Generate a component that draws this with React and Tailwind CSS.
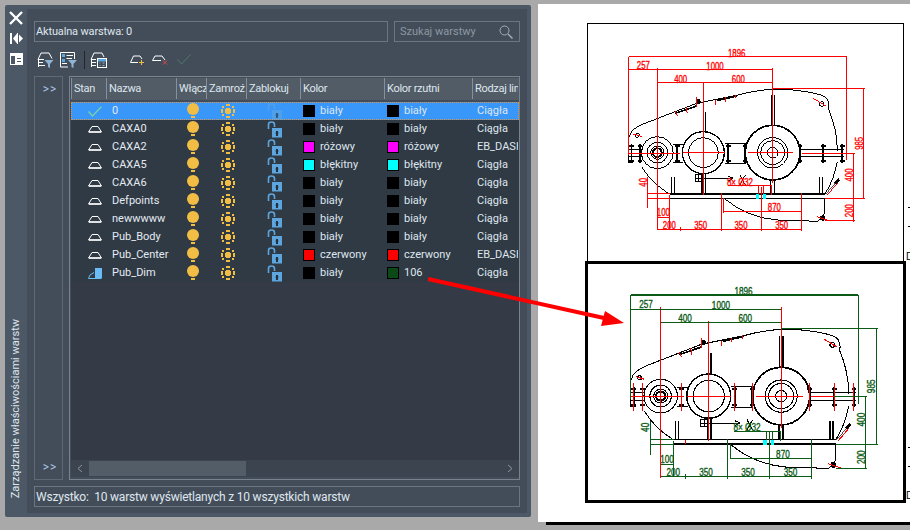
import React from 'react';

const rows = [
  { name: '0', color: '#000000', label: 'biały', plot: '#000000', plotLabel: 'biały', line: 'Ciągła', selected: true },
  { name: 'CAXA0', color: '#000000', label: 'biały', plot: '#000000', plotLabel: 'biały', line: 'Ciągła' },
  { name: 'CAXA2', color: '#ff00ff', label: 'różowy', plot: '#ff00ff', plotLabel: 'różowy', line: 'EB_DASHED' },
  { name: 'CAXA5', color: '#00ffff', label: 'błękitny', plot: '#00ffff', plotLabel: 'błękitny', line: 'Ciągła' },
  { name: 'CAXA6', color: '#000000', label: 'biały', plot: '#000000', plotLabel: 'biały', line: 'Ciągła' },
  { name: 'Defpoints', color: '#000000', label: 'biały', plot: '#000000', plotLabel: 'biały', line: 'Ciągła' },
  { name: 'newwwww', color: '#000000', label: 'biały', plot: '#000000', plotLabel: 'biały', line: 'Ciągła' },
  { name: 'Pub_Body', color: '#000000', label: 'biały', plot: '#000000', plotLabel: 'biały', line: 'Ciągła' },
  { name: 'Pub_Center', color: '#ff0000', label: 'czerwony', plot: '#ff0000', plotLabel: 'czerwony', line: 'EB_DASHED' },
  { name: 'Pub_Dim', color: '#000000', label: 'biały', plot: '#0b4a16', plotLabel: '106', line: 'Ciągła', current: true },
];

const headers = ['Stan', 'Nazwa', 'Włącz', 'Zamroź', 'Zablokuj', 'Kolor', 'Kolor rzutni', 'Rodzaj linii'];
const gridCols = 'grid grid-cols-[35px_70px_30px_40px_54px_84px_88px_46px]';

const LayerShape = ({ stroke = '#ffffff' }) => (
  <svg width="14" height="7" viewBox="0 0 14 7">
    <path d="M0.5 6 L4 0.5 H10 L13.5 6 Z" fill="none" stroke={stroke} strokeWidth="1" />
    <path d="M1 6 H13" stroke={stroke} strokeWidth="1.4" />
  </svg>
);

const Check = ({ color = '#7fd0a0', weight = 1.2 }) => (
  <svg width="14" height="11" viewBox="0 0 14 11">
    <path d="M0.5 5.5 L4.5 10 L13.5 0.5" fill="none" stroke={color} strokeWidth={weight} />
  </svg>
);

const Bulb = () => (
  <svg width="14" height="16" viewBox="0 0 14 16">
    <circle cx="7" cy="6" r="6" fill="#f2bd45" />
    <rect x="5" y="13" width="4" height="2" fill="#f2bd45" />
  </svg>
);

const Sun = () => (
  <svg width="14" height="14" viewBox="0 0 14 14" fill="#f2bd45" shapeRendering="crispEdges">
    <path d="M5 4 H9 V5 H10 V9 H9 V10 H5 V9 H4 V5 H5 Z" />
    <rect x="5" y="0" width="4" height="2" />
    <rect x="5" y="12" width="4" height="2" />
    <rect x="0" y="5" width="2" height="4" />
    <rect x="12" y="5" width="2" height="4" />
    <rect x="1" y="2" width="2" height="2" />
    <rect x="11" y="2" width="2" height="2" />
    <rect x="1" y="10" width="2" height="2" />
    <rect x="11" y="10" width="2" height="2" />
  </svg>
);

const Lock = ({ dim }) => (
  <svg width="15" height="17" viewBox="0 0 15 17" className={dim ? 'opacity-60' : ''}>
    <path d="M1.5 8 V3.5 Q1.5 1 4.5 1 Q7.5 1 7.5 3.5 V6" fill="none" stroke="#5da5de" strokeWidth="1.6" />
    <rect x="5" y="7" width="10" height="9.5" fill="#5da5de" />
    <path d="M9 10 H11 V11.5 H11.5 V12.5 H11 V15 H9 V12.5 H8.5 V11.5 H9 Z" fill="#26303a" />
  </svg>
);

const Swatch = ({ color }) => (
  <span className="h-[12px] w-[12px] shrink-0 border border-black" style={{ backgroundColor: color }} />
);

const Funnel = ({ x, y }) => (
  <path d={`M${x} ${y} h9 l-3.5 4 v4 l-2 -1 v-3 Z`} fill="#8fb4d4" stroke="none" />
);

const FilterLayersIcon = () => (
  <svg width="17" height="16" viewBox="0 0 17 16" fill="none" stroke="#ffffff">
    <path d="M1 7.5 L4 1 H12 L15 6.5 M1 7.5 H7" />
    <path d="M1 10.5 H6 M1 13.5 H8 M1.5 7.5 V15" />
    <Funnel x="7.5" y="8" />
  </svg>
);

const FilterListIcon = () => (
  <svg width="17" height="16" viewBox="0 0 17 16" fill="none" stroke="#ffffff">
    <path d="M0.5 0.5 H14.5 V7 M0.5 0.5 V15 H8" />
    <rect x="2" y="2" width="3" height="3" fill="#5da5de" stroke="none" />
    <rect x="2" y="7" width="3" height="3" fill="#5da5de" stroke="none" />
    <path d="M6.5 3.5 H13 M6.5 6.5 H12 M2 11.5 H7" />
    <Funnel x="8" y="8" />
  </svg>
);

const LayerStatesIcon = () => (
  <svg width="17" height="16" viewBox="0 0 17 16" fill="none" stroke="#ffffff">
    <path d="M1 7.5 L4 1 H12 L14 5 M1 7.5 H6 M1 10.5 H6 M1 13.5 H6 M1.5 7.5 V15" />
    <rect x="7.5" y="6.5" width="9" height="9" />
    <rect x="8" y="7" width="8" height="2.5" fill="#5da5de" stroke="none" />
    <path d="M9.5 11 h1 M12.5 11 h2 M9.5 13.5 h1 M12.5 13.5 h2" stroke="#8fb4d4" />
  </svg>
);

const NewLayerIcon = () => (
  <svg width="15" height="10" viewBox="0 0 15 10" fill="none">
    <path d="M0.5 7.5 L3.5 1 H10 L12 4 M0.5 7.5 H8" stroke="#ffffff" />
    <path d="M11.5 5 V10 M9 7.5 H14" stroke="#f2bd45" />
  </svg>
);

const DeleteLayerIcon = () => (
  <svg width="16" height="10" viewBox="0 0 16 10" fill="none">
    <path d="M0.5 5.5 L3 1 H10 L13 5 M0.5 5.5 H9" stroke="#ffffff" />
    <path d="M11 5.5 L15 9.5 M15 5.5 L11 9.5" stroke="#d94a4a" />
  </svg>
);

const Gearbox = ({ transform, dim, center, boltCenter }) => {
  const Label = ({ x, y, t, rot }) => (
    <text
      x={x}
      y={y}
      fill={dim}
      stroke={dim}
      strokeWidth="1"
      fontSize="30"
      textAnchor="middle"
      textLength={t.length * 13}
      lengthAdjust="spacingAndGlyphs"
      transform={rot ? `rotate(-90 ${x} ${y})` : undefined}
      fontFamily="'Liberation Sans', sans-serif"
    >
      {t}
    </text>
  );

  const bolts = [155, 180, 292, 445, 495, 660, 730, 787];

  return (
    <g transform={transform} fill="none" strokeWidth="3" shapeRendering="crispEdges">
      {/* housing */}
      <g stroke="#000000">
        <path d="M148 352 Q150 328 190 312 L350 250 L470 226 Q550 204 620 208 Q690 214 725 226 Q752 236 746 268 Q772 330 772 392" />
        <path d="M185 440 Q215 490 268 522 M772 425 Q762 480 735 522" />
        <path d="M270 522 H735 M270 535 H735" strokeWidth="4" />
        <path d="M432 535 Q500 592 590 600 L715 604 L735 580 V535" />
        <path d="M146 388 H185 M146 410 H185 M280 374 H310 M280 428 H310 M435 370 H498 M435 430 H498 M660 388 H792 M660 410 H792" />
        <path d="M146 388 V428 H160" />
        <circle cx="232" cy="398" r="48" />
        <circle cx="232" cy="398" r="31" />
        <circle cx="232" cy="398" r="20" />
        <circle cx="232" cy="398" r="13" strokeWidth="6" />
        <circle cx="370" cy="398" r="63" strokeWidth="4" />
        <circle cx="370" cy="398" r="45" />
        <circle cx="578" cy="398" r="82" strokeWidth="5" />
        <circle cx="578" cy="398" r="46" />
        <circle cx="578" cy="398" r="36" />
        <circle cx="578" cy="398" r="16" />
        <path d="M370 275 V335 M376 275 V335 M275 470 V522 M284 470 V522 M718 470 V522 M727 470 V522 M574 226 V315 M583 226 V315 M572 480 V522 M583 480 V522 M366 460 V522 M376 460 V522" strokeWidth="4" />
        <rect x="347" y="465" width="20" height="20" />
        <path d="M357 465 V485 M347 475 H460 M445 468 L460 475 L445 482" />
        <path d="M480 465 L496 495 M496 465 L480 495" />
        {bolts.map((x) => (
          <g key={x}>
            <path d={`M${x} 372 V430`} strokeWidth="5" />
            <path d={`M${x - 7} 378 H${x + 7} M${x - 7} 424 H${x + 7}`} strokeWidth="6" />
          </g>
        ))}
        <path d="M738 522 L772 482" strokeWidth="2" />
        <path d="M765 490 L778 478" strokeWidth="8" />
        <path d="M350 245 L360 240 M285 280 L350 258 M410 242 L470 228" strokeWidth="5" />
        <circle cx="355" cy="245" r="6" fill="#000000" />
        <circle cx="725" cy="252" r="7" />
        <circle cx="172" cy="346" r="6" />
        <circle cx="728" cy="594" r="7" fill="#000000" />
      </g>
      {/* centre lines */}
      <g stroke={center}>
        <path d="M146 400 H300 M308 398 H435 M505 398 H640 M665 400 H800" />
        <path d="M370 185 V525 M578 145 V490 M232 145 V630" />
        <path d="M160 342 L185 350 M700 235 L738 258 M712 590 L750 603 M742 525 L772 490" />
        <path d="M350 232 V262 M285 272 L292 288 M318 262 L322 280 M408 240 V255 M436 232 V245 M468 225 V235" />
        {boltCenter && bolts.map((x) => <path key={x} d={`M${x} 362 V440`} />)}
        {boltCenter && <path d="M302 522 V535 M424 522 V535 M545 522 V535 M665 522 V535" />}
      </g>
      {/* dimensions */}
      <g stroke={dim}>
        <path d="M146 110 H800 M146 110 V405 M800 110 V420" />
        <path d="M146 150 H578 M232 188 H578" />
        <path d="M578 205 H855 M852 205 V535 M735 535 H855" />
        <path d="M730 400 H825 M820 400 V605 M735 603 H825" />
        <path d="M202 470 V565 M200 522 H270 M200 535 H270" />
        <path d="M269 525 V625 M232 592 H269" />
        <path d="M232 628 H665 M302 620 V634 M424 520 V634 M545 500 V634 M665 520 V634" />
        <path d="M432 535 V578 M432 575 H665" />
        <path d="M443 498 H575 M535 498 V525 M552 498 V525 M575 498 V525" />
      </g>
      <Label x={470} y={110} t="1896" />
      <Label x={190} y={148} t="257" />
      <Label x={405} y={150} t="1000" />
      <Label x={302} y={188} t="400" />
      <Label x={475} y={188} t="600" />
      <Label x={848} y={370} t="985" rot />
      <Label x={818} y={465} t="400" rot />
      <Label x={818} y={572} t="200" rot />
      <Label x={200} y={487} t="40" rot />
      <Label x={250} y={588} t="100" />
      <Label x={268} y={626} t="200" />
      <Label x={362} y={626} t="350" />
      <Label x={483} y={626} t="350" />
      <Label x={605} y={626} t="350" />
      <Label x={583} y={574} t="870" />
      <Label x={480} y={497} t="8× Ø32" />
      <g fill="#00ffff" stroke="none">
        <rect x="527" y="522" width="11" height="14" />
        <rect x="549" y="522" width="9" height="14" />
      </g>
    </g>
  );
};

const Sheet = () => (
  <svg viewBox="538 4 372 518" width="372" height="518" className="block">
    <g fill="none" stroke="#000000" shapeRendering="crispEdges">
      <path d="M587.5 263 V23.5 H903.5 V263" strokeWidth="1.5" />
      <rect x="586.5" y="262.5" width="318" height="239" strokeWidth="3" />
      <path d="M908 207 H910 M908 226 H910 M908 447 H910 M908 466 H910" />
    </g>
    <Gearbox transform="translate(580 20) scale(0.3333)" dim="#ff0000" center="#ff0000" />
    <Gearbox transform="translate(579.85 256.4) scale(0.3483 0.351)" dim="#0b5a16" center="#ff0000" boltCenter />
    <text x="906" y="260" fontSize="10" fill="#000000" fontFamily="'Liberation Sans', sans-serif">D</text>
    <text x="906" y="499" fontSize="10" fill="#000000" fontFamily="'Liberation Sans', sans-serif">D</text>
  </svg>
);

const LayerRow = ({ row }) => (
  <div
    className={`${gridCols} h-[18px] items-center ${
      row.selected ? 'bg-[#3a97fa] outline-1 -outline-offset-1 outline-dotted outline-[#e0913a]' : ''
    }`}
  >
    <div className="flex justify-end pr-[4px]">
      {row.selected ? <Check /> : row.current ? (
        <svg width="14" height="11" viewBox="0 0 14 11">
          <path d="M0.5 10.5 L2 7 L6 4.5 M0.5 10.5 H13.5" fill="none" stroke="#6bbcf5" />
          <rect x="7" y="0" width="7" height="10" fill="#6bbcf5" />
        </svg>
      ) : <LayerShape />}
    </div>
    <div className="pl-[6px] text-[#e4ebf2]">{row.name}</div>
    <div className="flex justify-start pl-[10px]"><Bulb /></div>
    <div className="flex justify-start pl-[15px]"><Sun /></div>
    <div className="flex justify-start pl-[21px]"><Lock dim={row.selected} /></div>
    <div className="flex items-center gap-[5px] pl-[3px]">
      <Swatch color={row.color} />
      <span>{row.label}</span>
    </div>
    <div className="flex items-center gap-[5px] pl-[3px]">
      <Swatch color={row.plot} />
      <span>{row.plotLabel}</span>
    </div>
    <div className="overflow-hidden whitespace-nowrap pl-[5px]">{row.line}</div>
  </div>
);

export default function App() {
  return (
    <div className="relative flex h-[530px] w-[910px] overflow-hidden bg-[#a9a9a9] font-['Roboto',sans-serif] text-[11px] text-[#dfe6ee]">
      {/* layer panel */}
      <div className="ml-[5px] mt-[5px] flex h-[512px] w-[526px] rounded-[2px] bg-[#4c5865] pb-[4px] pr-[4px] pt-[4px]">
        <div className="flex w-[22px] flex-col items-center pt-[1px]">
          <svg width="14" height="14" viewBox="0 0 14 14" className="mt-[1px]">
            <path d="M1 1 L13 13 M13 1 L1 13" stroke="#ffffff" strokeWidth="2.4" />
          </svg>
          <svg width="13" height="11" viewBox="0 0 13 11" className="mt-[8px]" fill="#ffffff">
            <rect x="0" y="0" width="2" height="11" />
            <path d="M7 0.5 V10.5 L3 5.5 Z" />
            <rect x="7" y="0" width="1" height="11" />
            <path d="M9 1.5 V9.5 L13 5.5 Z" />
          </svg>
          <svg width="13" height="12" viewBox="0 0 13 12" className="mt-[9px]">
            <rect width="13" height="12" fill="#ffffff" />
            <rect x="1" y="3" width="4" height="8" fill="#4c5865" />
            <rect x="7" y="5" width="4" height="1" fill="#4c5865" />
            <rect x="7" y="8" width="4" height="1" fill="#4c5865" />
          </svg>
          <div className="mt-auto mb-[15px] rotate-180 whitespace-nowrap [writing-mode:vertical-rl]">
            Zarządzanie właściwościami warstw
          </div>
        </div>

        <div className="flex min-w-0 flex-1 flex-col bg-[#434d59] px-[7px] pt-[12px]">
          <div className="flex gap-[6px]">
            <div className="flex h-[21px] w-[354px] items-center border border-[#6c7681] pl-[1px] pt-[2px] text-[11px] tracking-[-0.15px]">
              Aktualna warstwa: 0
            </div>
            <div className="flex h-[21px] w-[126px] items-center justify-between border border-[#6c7681] pl-[5px] pr-[6px] text-[#8d97a2]">
              <span className="pt-[2px]">Szukaj warstwy</span>
              <svg width="14" height="14" viewBox="0 0 14 14" fill="none" stroke="#a3acb5">
                <circle cx="5.5" cy="5.5" r="4.5" />
                <path d="M9 9 L13.5 13.5" strokeWidth="1.5" />
              </svg>
            </div>
          </div>

          <div className="mt-[9px] flex h-[17px] items-center pl-[3px]">
            <FilterLayersIcon />
            <div className="ml-[6px]"><FilterListIcon /></div>
            <div className="ml-[7px] h-[18px] w-px bg-[#20262d]" />
            <div className="ml-[5px]"><LayerStatesIcon /></div>
            <div className="ml-[23px]"><NewLayerIcon /></div>
            <div className="ml-[7px]"><DeleteLayerIcon /></div>
            <div className="ml-[9px]"><Check color="#4f7a68" weight={1} /></div>
          </div>

          <div className="mt-[8px] flex h-[404px] gap-[6px]">
            <div className="flex w-[29px] flex-col items-center justify-between border border-[#5f6974] py-[3px] pl-[3px] text-[12px] text-[#a9c2e0]">
              <span className="tracking-[1px]">&gt;&gt;</span>
              <span className="tracking-[1px]">&gt;&gt;</span>
            </div>

            <div className="flex w-[451px] flex-col overflow-hidden border border-[#7a838d] pl-[1px] pt-[1px]">
              <div className={`${gridCols} h-[22px] items-center bg-[#525c66] pb-px`}>
                {headers.map((h) => (
                  <div key={h} className="h-full overflow-hidden whitespace-nowrap border-l border-[#87909a] pl-[2px] leading-[21px] tracking-[-0.3px]">
                    {h}
                  </div>
                ))}
              </div>
              <div className="mt-[2px] flex-1 bg-[#343b46]">
                <div className="bg-[#303a45]">
                  {rows.map((row) => <LayerRow key={row.name} row={row} />)}
                </div>
              </div>
              <div className="flex h-[17px] items-center justify-between bg-[#3c444f] pr-[6px] text-[#8d97a2]">
                <div className="flex h-full items-center">
                  <svg width="18" height="9" viewBox="0 0 18 9" fill="none" stroke="#8d97a2"><path d="M11 1 L7 4.5 L11 8" /></svg>
                  <div className="h-[15px] w-[157px] bg-[#535d68]" />
                </div>
                <svg width="6" height="9" viewBox="0 0 6 9" fill="none" stroke="#8d97a2"><path d="M1 1 L5 4.5 L1 8" /></svg>
              </div>
              <div className="h-[2px]" />
            </div>
          </div>

          <div className="mt-[6px] flex h-[21px] items-center whitespace-pre border border-[#6c7681] pl-[1px] text-[12px] tracking-[-0.2px]">
            Wszystko:  10 warstw wyświetlanych z 10 wszystkich warstw
          </div>
        </div>
      </div>

      {/* drawing sheet */}
      <div className="ml-[7px] flex flex-col pt-[4px]">
        <div className="h-[518px] w-[372px] bg-white"><Sheet /></div>
        <div className="ml-[8px] h-[3px] bg-black" />
      </div>

      {/* red arrow over both */}
      <svg width="910" height="530" className="pointer-events-none absolute left-0 top-0">
        <path d="M428 279 L604 318" stroke="#ff0000" strokeWidth="4" />
        <polygon points="624,323 605,311 601,326" fill="#ff0000" />
      </svg>
    </div>
  );
}
